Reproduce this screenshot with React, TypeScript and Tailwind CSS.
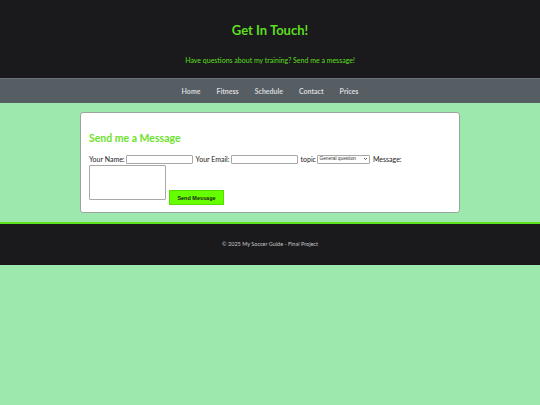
import React from 'react';

const links = ['Home', 'Fitness', 'Schedule', 'Contact', 'Prices'];

export default function App() {
  return (
    <div className="min-h-screen bg-[#9de8ac] font-['Lato',sans-serif]">
      {/* Header */}
      <header className="bg-[#1a1a1c] h-[78px] flex flex-col items-center pt-[20px]">
        <h1 className="text-[13px] font-bold text-[#5ede1e] leading-[20px]">Get In Touch!</h1>
        <p className="mt-[15px] text-[7px] text-[#5ede1e] leading-[10px]">
          Have questions about my training? Send me a message!
        </p>
      </header>

      {/* Nav */}
      <nav className="bg-[#575e63] h-[25px] border-t border-[#6a7075] flex items-center justify-center gap-[16px] pt-[1px]">
        {links.map((l) => (
          <a key={l} className="text-[7px] font-bold text-[#d6d9db]">
            {l}
          </a>
        ))}
      </nav>

      {/* Main */}
      <main className="pt-[9px] pb-[9px] flex justify-center">
        <div className="w-[380px] h-[101px] bg-white border border-[#9aa59c] rounded-[3px] px-[8px] pt-[18px]">
          <h2 className="text-[10.5px] font-bold text-[#6be22a] leading-[14px]">Send me a Message</h2>
          <form className="mt-[9px] text-[7px] text-[#222] leading-[10px]">
            <div className="flex items-center gap-[1.5px] flex-wrap">
              <label>Your Name:</label>
              <input className="w-[67px] h-[9px] border border-[#a8a8a8] rounded-[1px] bg-white" />
              <label className="ml-[1px]">Your Email:</label>
              <input className="w-[67px] h-[9px] border border-[#a8a8a8] rounded-[1px] bg-white" />
              <label className="ml-[1px]">topic</label>
              <div className="w-[53px] h-[9px] border border-[#a8a8a8] rounded-[1px] bg-white flex items-center justify-between px-[1px] font-['Liberation_Sans',sans-serif] text-[4.8px] text-[#333]">
                <span>General question</span>
                <svg width="5" height="4" viewBox="0 0 10 8" className="shrink-0">
                  <path d="M2 2 L5 5 L8 2" stroke="#333" strokeWidth="1.6" fill="none" />
                </svg>
              </div>
              <label className="ml-[1px]">Message:</label>
            </div>
            <div className="flex items-end gap-[3px] mt-[1px]">
              <textarea className="w-[77px] h-[35px] border border-[#a8a8a8] rounded-[1px] resize-none bg-white" />
              <button
                type="button"
                className="w-[55px] h-[15px] bg-[#66ff00] border border-[#55dd00] font-['Liberation_Sans',sans-serif] font-bold text-[5.5px] text-[#1a1a1a] mb-[-5px]"
              >
                Send Message
              </button>
            </div>
          </form>
        </div>
      </main>

      {/* Footer */}
      <footer className="border-t-[2px] border-[#5ee11e] bg-[#1a1a1c] h-[43px] flex items-center justify-center">
        <p className="text-[5.5px] text-[#c8c8c8]">© 2025 My Soccer Guide - Final Project</p>
      </footer>
    </div>
  );
}
